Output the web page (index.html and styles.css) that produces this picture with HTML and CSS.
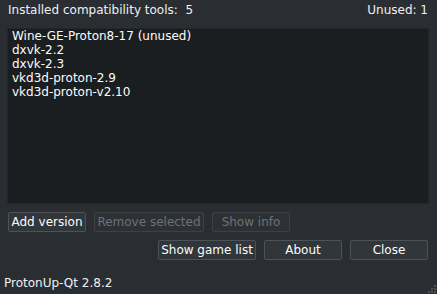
FILE: index.html
```html
<!DOCTYPE html>
<html>
<head>
<meta charset="utf-8">
<link rel="stylesheet" href="styles.css">
</head>
<body>
<div class="window">
  <div class="header">
    <span class="label">Installed compatibility tools:&nbsp; 5</span>
    <span class="label">Unused: 1</span>
  </div>
  <div class="list">
    <div class="item">Wine-GE-Proton8-17 (unused)</div>
    <div class="item">dxvk-2.2</div>
    <div class="item">dxvk-2.3</div>
    <div class="item">vkd3d-proton-2.9</div>
    <div class="item">vkd3d-proton-v2.10</div>
  </div>
  <div class="row1">
    <button class="btn w78">Add version</button>
    <button class="btn w110" disabled>Remove selected</button>
    <button class="btn w78" disabled>Show info</button>
  </div>
  <div class="row2">
    <button class="btn w98">Show game list</button>
    <button class="btn w78">About</button>
    <button class="btn w78">Close</button>
  </div>
  <div class="status">
    <span class="label">ProtonUp-Qt 2.8.2</span>
    <div class="grip">
      <i class="d d1"></i><i class="d d2"></i><i class="d d3"></i>
      <i class="d d4"></i><i class="d d5"></i><i class="d d6"></i>
    </div>
  </div>
</div>
</body>
</html>
```
FILE: styles.css
```css
html, body {
  margin: 0;
  padding: 0;
  background: #2a2e32;
}
body {
  font-family: "DejaVu Sans", sans-serif;
  font-size: 12px;
  color: #fcfcfc;
}
.window {
  width: 437px;
  height: 294px;
  display: flex;
  flex-direction: column;
  position: relative;
  overflow: hidden;
}
.header {
  display: flex;
  justify-content: space-between;
  padding: 2px 9px 0 8px;
  height: 26px;
  line-height: 16px;
}
.label {
  color: #eff0f1;
}
.list {
  margin: 0 8px 0 7px;
  height: 176px;
  background: #1b1e20;
  border: 1px solid #232629;
  padding: 0 3px;
  box-sizing: border-box;
  line-height: 14px;
}
.item {
  height: 14px;
  padding-left: 1px;
}
.row1 {
  display: flex;
  gap: 8px;
  padding: 8px 0 0 8px;
}
.row2 {
  display: flex;
  gap: 8px;
  justify-content: flex-end;
  padding: 8px 9px 0 0;
}
.btn {
  height: 20px;
  box-sizing: border-box;
  font-family: "DejaVu Sans", sans-serif;
  font-size: 12px;
  color: #fcfcfc;
  background: #31363b;
  border: 1px solid #4d5257;
  border-radius: 2px;
  padding: 0;
  line-height: 17px;
  text-align: center;
}
.btn:disabled {
  color: #6e7275;
  background: #2d3136;
  border-color: #3d4146;
}
.w78 { width: 78px; }
.w98 { width: 98px; }
.w110 { width: 110px; }
.status {
  flex: 1;
  display: flex;
  align-items: flex-end;
  padding: 0 0 3px 4px;
  line-height: 16px;
}
.grip {
  position: absolute;
  right: 0;
  bottom: 0;
  width: 10px;
  height: 10px;
}
.d {
  position: absolute;
  width: 2px;
  height: 2px;
  background: #4d5257;
}
.d1 { right: 1px; bottom: 1px; }
.d2 { right: 4px; bottom: 1px; }
.d3 { right: 7px; bottom: 1px; }
.d4 { right: 1px; bottom: 4px; }
.d5 { right: 4px; bottom: 4px; }
.d6 { right: 1px; bottom: 7px; }
```
